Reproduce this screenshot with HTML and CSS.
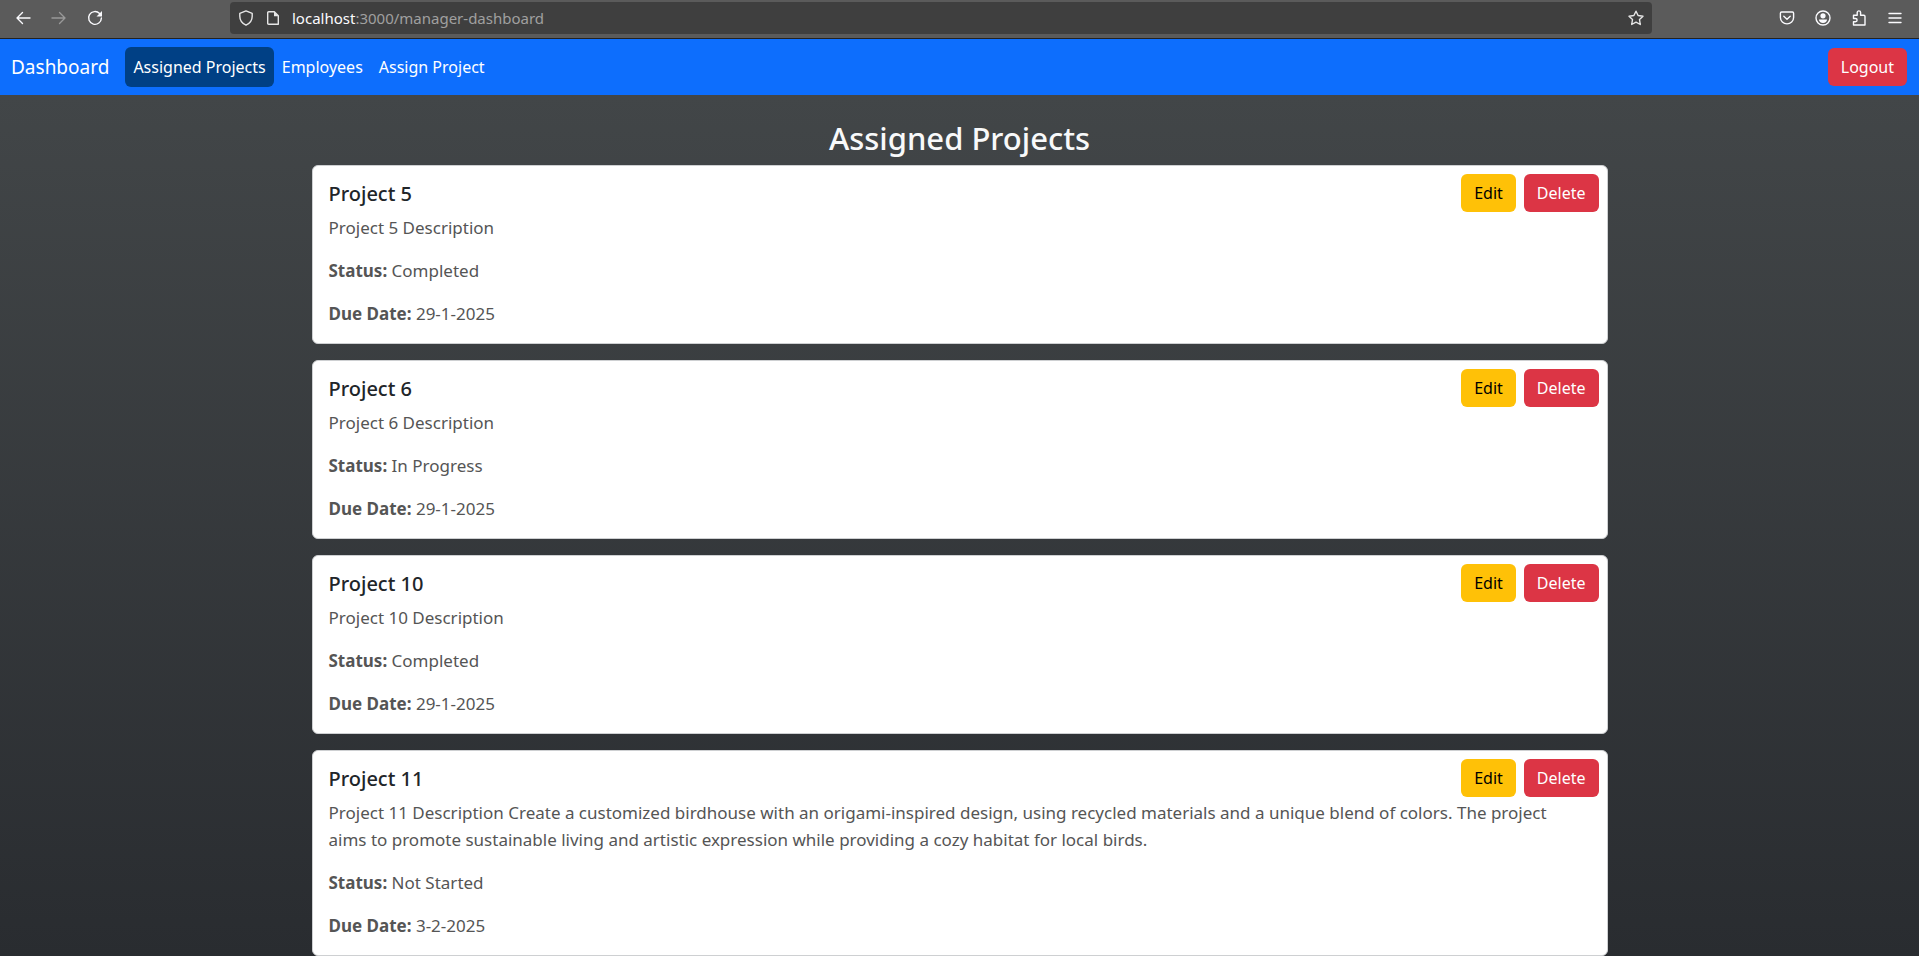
FILE: index.html
```html
<!DOCTYPE html>
<html lang="en">
<head>
<meta charset="utf-8">
<meta name="viewport" content="width=device-width, initial-scale=1">
<title>Manager Dashboard</title>
<link rel="stylesheet" href="styles.css">
</head>
<body>
<div class="toolbar">
  <div class="toolbar-group">
    <button class="tool" type="button" aria-label="Back"><svg viewBox="0 0 16 16"><path d="M15 8H2M7.500 2.500 2 8l5.500 5.500"/></svg></button>
    <button class="tool tool-off" type="button" aria-label="Forward"><svg viewBox="0 0 16 16"><path d="M1 8h13M8.500 2.500 14 8l-5.500 5.500"/></svg></button>
    <button class="tool" type="button" aria-label="Reload"><svg viewBox="0 0 16 16"><path d="M12.600 3.500A6.400 6.400 0 1 0 14.400 8"/><path class="solid" d="M15 1v5.500H9.500z"/></svg></button>
  </div>
  <div class="address">
    <svg viewBox="0 0 16 16"><path d="M8 .9 14.200 3.300v2.900c0 4-2.400 7.200-6.200 9-3.800-1.800-6.200-5-6.200-9V3.300z"/></svg>
    <svg viewBox="0 0 16 16"><path d="M3.700 1.700h5.600l4 4v8.600h-9.600q-1 0-1-1V2.700q0-1 1-1z"/><path class="solid" d="M9 1.500v4.700h4.700z"/></svg>
    <span class="url"><span class="host">localhost</span>:3000/manager-dashboard</span>
    <button class="star" type="button" aria-label="Bookmark this page"><svg viewBox="0 0 16 16"><path d="m8 1.200 2.100 4.300 4.900.7-3.500 3.400.8 4.900L8 12.200l-4.300 2.300.8-4.900L1 6.200l4.900-.7z"/></svg></button>
  </div>
  <div class="toolbar-group">
    <button class="tool" type="button" aria-label="Save to Pocket"><svg viewBox="0 0 16 16"><path d="M2.600 2h10.800q1.200 0 1.200 1.200V7.500a6.600 6.400 0 0 1-13.200 0V3.200Q1.400 2 2.600 2zM4.800 6.200 8 9.200l3.200-3"/></svg></button>
    <button class="tool" type="button" aria-label="Account"><svg viewBox="0 0 16 16"><circle cx="8" cy="8" r="7"/><circle class="solid" cx="8" cy="5.800" r="2.600"/><path class="solid" d="M3.900 9.500h8.200c0 2-1.800 3.400-4.100 3.400S3.900 11.500 3.900 9.500z"/></svg></button>
    <button class="tool" type="button" aria-label="Extensions"><svg viewBox="0 0 16 16"><path d="M2.500 5.200h3.700V2.600a1.700 1.700 0 0 1 3.400 0v2.600h3.200q1.200 0 1.200 1.200V15H2.500v-3.300h2a1.500 1.500 0 0 0 0-3.200h-2z"/></svg></button>
    <button class="tool" type="button" aria-label="Menu"><svg viewBox="0 0 16 16"><path d="M2 3.500h12M2 8h12M2 12.500h12"/></svg></button>
  </div>
</div>
<nav class="navbar">
  <a class="brand" href="#">Dashboard</a>
  <a class="nav-link active" href="#">Assigned Projects</a>
  <a class="nav-link" href="#">Employees</a>
  <a class="nav-link" href="#">Assign Project</a>
  <button class="btn btn-danger logout" type="button">Logout</button>
</nav>
<main class="page">
  <h1 class="page-title">Assigned Projects</h1>
  <div class="projects">
    <article class="card">
      <header class="card-head">
        <h2 class="card-title">Project 5</h2>
        <button class="btn btn-warning" type="button">Edit</button>
        <button class="btn btn-danger" type="button">Delete</button>
      </header>
      <div class="card-body">
        <p>Project 5 Description</p>
        <p><strong>Status:</strong> Completed</p>
        <p><strong>Due Date:</strong> 29-1-2025</p>
      </div>
    </article>
    <article class="card">
      <header class="card-head">
        <h2 class="card-title">Project 6</h2>
        <button class="btn btn-warning" type="button">Edit</button>
        <button class="btn btn-danger" type="button">Delete</button>
      </header>
      <div class="card-body">
        <p>Project 6 Description</p>
        <p><strong>Status:</strong> In Progress</p>
        <p><strong>Due Date:</strong> 29-1-2025</p>
      </div>
    </article>
    <article class="card">
      <header class="card-head">
        <h2 class="card-title">Project 10</h2>
        <button class="btn btn-warning" type="button">Edit</button>
        <button class="btn btn-danger" type="button">Delete</button>
      </header>
      <div class="card-body">
        <p>Project 10 Description</p>
        <p><strong>Status:</strong> Completed</p>
        <p><strong>Due Date:</strong> 29-1-2025</p>
      </div>
    </article>
    <article class="card">
      <header class="card-head">
        <h2 class="card-title">Project 11</h2>
        <button class="btn btn-warning" type="button">Edit</button>
        <button class="btn btn-danger" type="button">Delete</button>
      </header>
      <div class="card-body">
        <p>Project 11 Description Create a customized birdhouse with an origami-inspired design, using recycled materials and a unique blend of colors. The project aims to promote sustainable living and artistic expression while providing a cozy habitat for local birds.</p>
        <p><strong>Status:</strong> Not Started</p>
        <p><strong>Due Date:</strong> 3-2-2025</p>
      </div>
    </article>
  </div>
</main>
</body>
</html>
```

FILE: styles.css
```css
* {
  box-sizing: border-box;
}

body {
  margin: 0;
  min-height: 100vh;
  display: flex;
  flex-direction: column;
  font-family: "Noto Sans", "Open Sans", sans-serif;
  font-size: 16px;
  line-height: 24px;
  color: #212529;
}

h1,
h2,
p {
  margin: 0;
}

a {
  text-decoration: none;
}

button {
  font: inherit;
  color: inherit;
  cursor: pointer;
}

svg {
  width: 16px;
  height: 16px;
  flex: none;
  fill: none;
  stroke: currentColor;
  stroke-width: 1.4;
  stroke-linecap: round;
  stroke-linejoin: round;
}

svg .solid {
  fill: currentColor;
  stroke: none;
}

/* Browser toolbar */
.toolbar {
  display: flex;
  justify-content: space-between;
  gap: 117px;
  padding: 2px 6px 4px 5px;
  background: #5b5b5b;
  border-bottom: 1px solid #222;
  color: #fbfbfe;
}

.toolbar-group {
  display: flex;
}

.tool {
  display: grid;
  place-items: center;
  width: 36px;
  height: 32px;
  padding: 0;
  border: 0;
  background: none;
}

.tool-off {
  color: #999;
}

.address {
  flex: 1;
  display: flex;
  align-items: center;
  gap: 11px;
  padding: 0 8px;
  border-radius: 4px;
  background: #3f3f3f;
  color: #e6e6e6;
}

.url {
  flex: 1;
  font-size: 15px;
  color: #a0a0a0;
}

.host {
  color: #fbfbfe;
}

.star {
  display: grid;
  padding: 0;
  border: 0;
  background: none;
}

/* Site navigation */
.navbar {
  display: flex;
  align-items: center;
  padding: 8px 12px 8px 11px;
  background: #0d6efd;
  color: #fff;
}

.brand {
  margin-right: 16px;
  font-size: 19px;
  color: #fff;
}

.nav-link {
  padding: 8px;
  border-radius: 6px;
  color: #fff;
}

.nav-link.active {
  background: #004085;
}

.logout {
  margin-left: auto;
}

.btn {
  padding: 6px 12px;
  border: 1px solid transparent;
  border-radius: 6px;
}

.btn-warning {
  background: #ffc107;
  color: #000;
}

.btn-danger {
  background: #dc3545;
  color: #fff;
}

/* Project list */
.page {
  flex: 1;
  padding: 24px 12px 0;
  background: linear-gradient(#424648, #292c30);
}

.page-title {
  margin-bottom: 8px;
  font-size: 31px;
  font-weight: 500;
  line-height: 38px;
  text-align: center;
  color: #f8f9fa;
}

.projects {
  display: grid;
  gap: 16px;
  max-width: 1296px;
  margin: 0 auto;
}

.card {
  padding: 8px 8px 16px;
  border: 1px solid #ced0d2;
  border-radius: 6px;
  background: #fff;
}

.card-head {
  display: flex;
  align-items: flex-start;
  gap: 8px;
  margin-bottom: 2px;
}

.card-title {
  flex: 1;
  padding: 8px 8px 0;
  font-size: 20px;
  font-weight: 500;
  line-height: 24px;
}

.card-body {
  display: grid;
  gap: 16px;
  padding: 0 24px 0 8px;
  font-size: 17px;
  line-height: 27px;
  color: #555;
}
```
